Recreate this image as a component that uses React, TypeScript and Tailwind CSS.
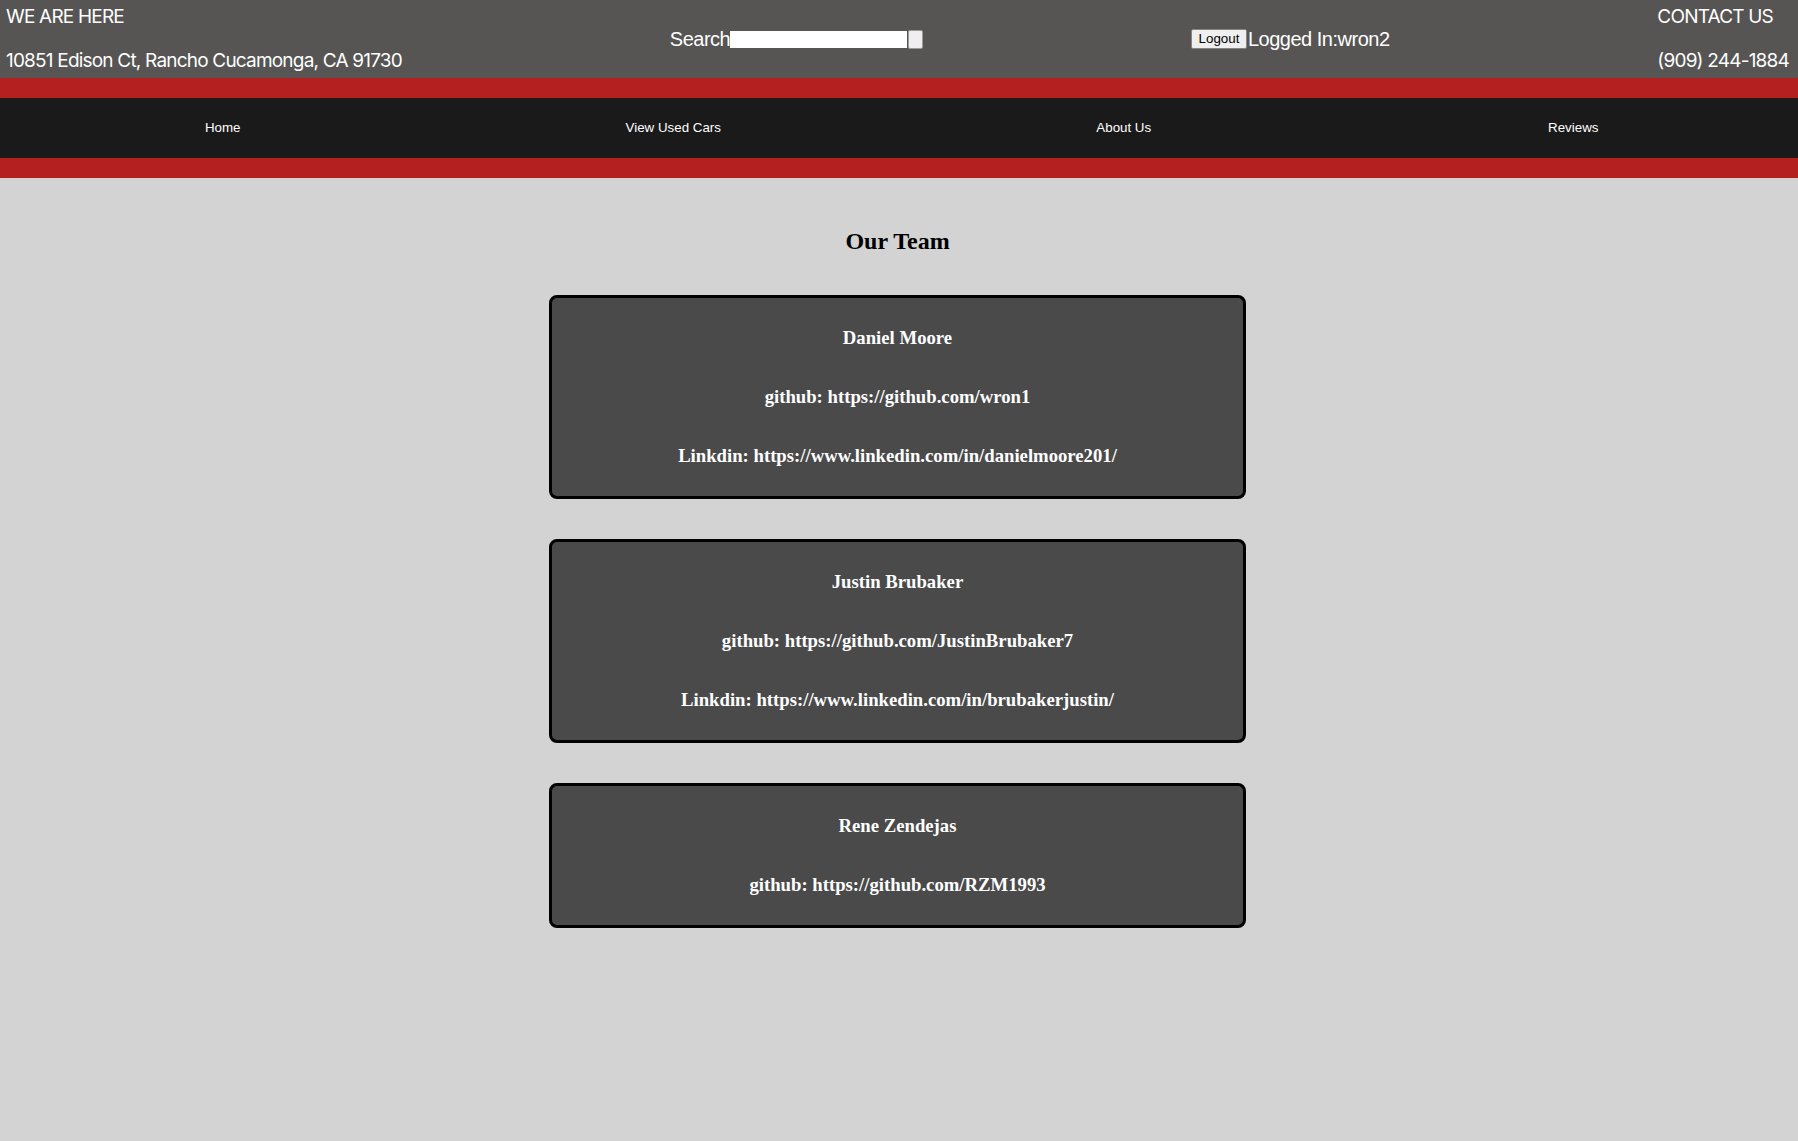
import React from "react";

const team = [
  {
    name: "Daniel Moore",
    lines: [
      "github: https://github.com/wron1",
      "Linkdin: https://www.linkedin.com/in/danielmoore201/",
    ],
  },
  {
    name: "Justin Brubaker",
    lines: [
      "github: https://github.com/JustinBrubaker7",
      "Linkdin: https://www.linkedin.com/in/brubakerjustin/",
    ],
  },
  {
    name: "Rene Zendejas",
    lines: ["github: https://github.com/RZM1993"],
  },
];

export default function App() {
  return (
    <div className="min-h-[1141px] bg-[#d3d3d3]">
      <header className="h-[78px] bg-[#565553] flex items-center justify-between pl-[6px] pr-[9px] text-white">
        <div className="flex flex-col gap-[20px] font-['Inter',sans-serif] text-[19px] tracking-[-0.8px] leading-[24px]">
          <span>WE ARE HERE</span>
          <span>10851 Edison Ct, Rancho Cucamonga, CA 91730</span>
        </div>
        <div className="flex items-center font-['Liberation_Sans',Arial,sans-serif] text-[20px] tracking-[-0.5px]">
          <span>Search</span>
          <div className="w-[177px] h-[17px] bg-white" />
          <div className="ml-[1px] w-[15px] h-[19px] bg-[#efefef] border border-[#9a9a9a] rounded-[2px]" />
        </div>
        <div className="flex items-center font-['Liberation_Sans',Arial,sans-serif]">
          <button className="h-[20px] w-[56px] bg-[#efefef] border border-[#858585] rounded-[2px] text-black text-[13.33px] leading-none">
            Logout
          </button>
          <span className="text-[20px] tracking-[-0.5px] ml-[1px]">Logged In:wron2</span>
        </div>
        <div className="flex flex-col gap-[20px] font-['Inter',sans-serif] text-[19px] tracking-[-0.8px] leading-[24px]">
          <span>CONTACT US</span>
          <span>(909) 244-1884</span>
        </div>
      </header>
      <div className="h-[20px] bg-[#b41f20]" />
      <nav className="h-[60px] bg-[#1b1a1b] grid grid-cols-4 items-center text-white font-['Liberation_Sans',Arial,sans-serif] text-[13.33px]">
        <span className="text-center pr-[4px]">Home</span>
        <span className="text-center pr-[2px]">View Used Cars</span>
        <span className="text-center">About Us</span>
        <span className="text-center">Reviews</span>
      </nav>
      <div className="h-[20px] bg-[#b41f20]" />
      <main className="flex flex-col items-center pr-[3px] font-['Liberation_Serif','Times_New_Roman',serif]">
        <h2 className="mt-[49px] text-[24px] font-bold leading-[28px] text-black">Our Team</h2>
        <div className="mt-[40px] flex flex-col gap-[40px]">
          {team.map((m) => (
            <div
              key={m.name}
              className="w-[697px] bg-[#4a4a4a] border-[3px] border-black rounded-[8px] pt-[29px] pb-[30px] flex flex-col items-center gap-[38px] text-white font-bold text-[18.72px] leading-[21px]"
            >
              <span>{m.name}</span>
              {m.lines.map((l) => (
                <span key={l}>{l}</span>
              ))}
            </div>
          ))}
        </div>
      </main>
    </div>
  );
}
